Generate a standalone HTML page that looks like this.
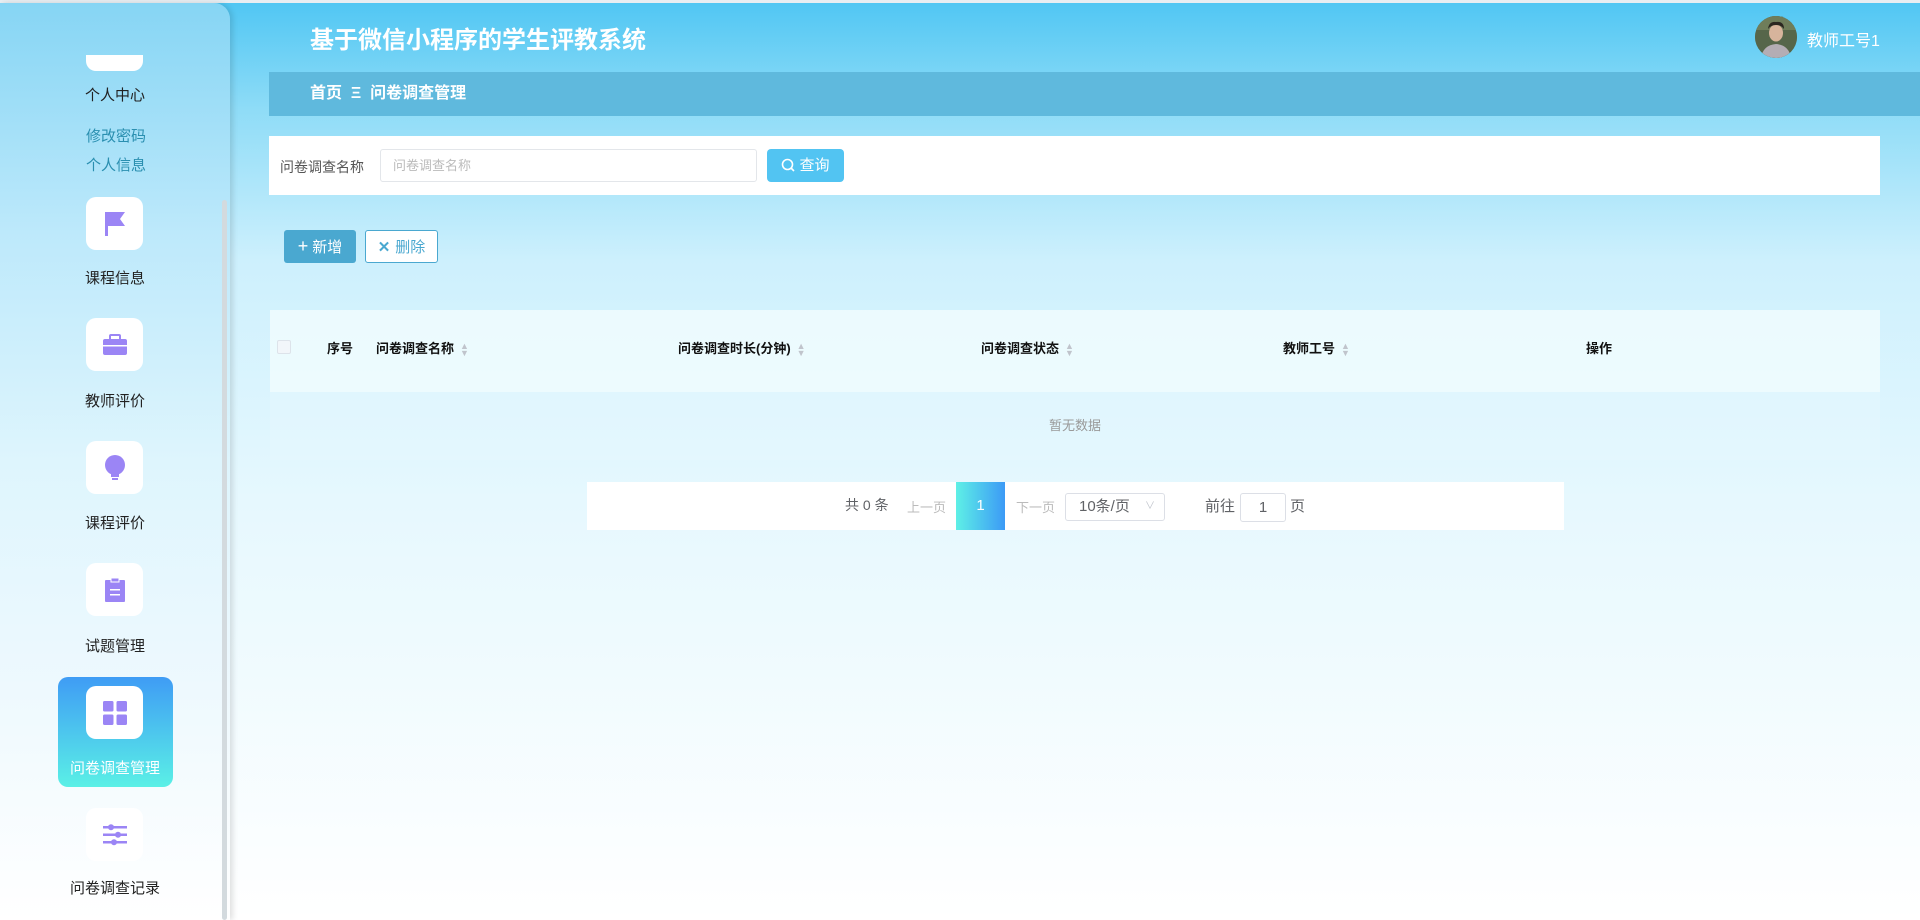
<!DOCTYPE html>
<html><head><meta charset="utf-8"><style>
*{box-sizing:border-box;margin:0;padding:0}
body{width:1920px;height:920px;overflow:hidden;font-family:"Liberation Sans","Noto Sans CJK SC",sans-serif;background:linear-gradient(180deg,#4fc6f3 0px,#8fdcf7 110px,#cdf0fd 260px,#e6f8fe 500px,#ffffff 920px);position:relative}
.top{position:absolute;left:0;top:0;width:1920px;height:3px;background:#e8eef2}
.side{position:absolute;left:0;top:3px;width:230px;height:917px;border-radius:0 16px 0 0;background:linear-gradient(180deg,#86d5f4 0%,#bde9fb 25%,#def5fd 50%,#eef9fe 75%,#fff 100%);box-shadow:3px 0 6px rgba(0,0,0,.12);overflow:hidden}
.scroll{position:absolute;left:222px;top:200px;width:5px;height:720px;background:#d3dade;border-radius:3px}
.ib{position:absolute;left:86px;width:57px;height:53px;background:#fff;border-radius:10px;display:flex;align-items:center;justify-content:center}
.lb{position:absolute;left:0;width:230px;text-align:center;font-size:15px;color:#222}
.sub{position:absolute;left:86px;font-size:15px;color:#2a8fb0}
.active{position:absolute;left:58px;top:674px;width:115px;height:110px;border-radius:10px;background:linear-gradient(180deg,#3f9cf5,#5af0e6)}
.title{position:absolute;left:310px;top:20px;font-size:24px;font-weight:bold;color:#fff}
.user{position:absolute;left:1807px;top:27px;font-size:16px;color:#fff}
.av{position:absolute;left:1755px;top:16px;width:42px;height:42px;border-radius:50%;overflow:hidden;background:#5b6a4e}
.bc{position:absolute;left:269px;top:72px;width:1651px;height:44px;background:#5fb9dd;color:#fff;font-weight:bold;font-size:16px;line-height:44px;padding-left:41px}
.search{position:absolute;left:269px;top:136px;width:1611px;height:59px;background:#fff}
.search .l{position:absolute;left:11px;top:21px;font-size:14px;color:#555}
.search .in{position:absolute;left:111px;top:13px;width:377px;height:33px;border:1px solid #e3e6ea;border-radius:3px;font-size:13px;color:#bbb;line-height:31px;padding-left:12px}
.btn{position:absolute;top:230px;height:33px;border-radius:3px;font-size:15px;line-height:33px;text-align:center}
.th{position:absolute;left:270px;top:310px;width:1610px;height:82px;background:rgba(240,251,254,.85)}
.th span{position:absolute;top:28px;font-size:13px;font-weight:bold;color:#111}
.sort{display:inline-block;width:9px;margin-left:6px;vertical-align:middle;color:#c0c4cc;font-size:9px;line-height:7px;font-style:normal}
.empty{position:absolute;left:270px;top:392px;width:1610px;height:68px;background:rgba(230,247,253,.5);text-align:center;line-height:68px;font-size:13px;color:#999}
.pg{position:absolute;left:587px;top:482px;width:977px;height:48px;background:#fff;font-size:15px;color:#606266}
.pg>*{position:absolute}
</style></head><body>
<div class="top"></div>
<div class="title">基于微信小程序的学生评教系统</div>
<div class="av"><svg width="42" height="42" viewBox="0 0 42 42"><rect width="42" height="42" fill="#56664a"/><rect y="0" width="42" height="14" fill="#6f7d5a"/><ellipse cx="21" cy="17" rx="7" ry="8.5" fill="#d7b49c"/><path d="M13 13Q14 5 21 6Q29 5 29 13Q26 9 21 9Q16 9 13 13Z" fill="#2b2620"/><path d="M6 42Q8 29 21 28Q34 29 36 42Z" fill="#b4adb4"/></svg></div>
<div class="user">教师工号1</div>
<div class="bc">首页 &nbsp;Ξ&nbsp; 问卷调查管理</div>

<div class="side">
 <div class="ib" style="top:52px;height:16px;border-radius:0 0 10px 10px"></div>
 <div class="lb" style="top:81px">个人中心</div>
 <div class="sub" style="top:122px">修改密码</div>
 <div class="sub" style="top:151px">个人信息</div>
 <div class="ib" style="top:194px"><svg width="24" height="28" viewBox="0 0 24 28"><rect x="2" y="2" width="3" height="24" fill="#9b85f5"/><path d="M5 2H22L17 9L22 16H5Z" fill="#9b85f5"/></svg></div>
 <div class="lb" style="top:264px">课程信息</div>
 <div class="ib" style="top:315px"><svg width="26" height="22" viewBox="0 0 26 22"><rect x="8" y="1" width="10" height="5" rx="1" fill="none" stroke="#9b85f5" stroke-width="2"/><rect x="1" y="5" width="24" height="16" rx="2" fill="#9b85f5"/><rect x="1" y="11" width="24" height="1.5" fill="#fff"/></svg></div>
 <div class="lb" style="top:387px">教师评价</div>
 <div class="ib" style="top:438px"><svg width="24" height="28" viewBox="0 0 24 28"><circle cx="12" cy="11" r="10" fill="#9b85f5"/><rect x="8" y="19" width="8" height="4" fill="#9b85f5"/><rect x="9" y="24" width="6" height="2" fill="#9b85f5"/></svg></div>
 <div class="lb" style="top:509px">课程评价</div>
 <div class="ib" style="top:560px"><svg width="22" height="26" viewBox="0 0 22 26"><rect x="1" y="3" width="20" height="22" rx="1" fill="#9b85f5"/><rect x="7" y="1" width="8" height="4" fill="#9b85f5" stroke="#fff" stroke-width="1"/><rect x="6" y="12" width="10" height="1.5" fill="#fff"/><rect x="6" y="17" width="10" height="1.5" fill="#fff"/></svg></div>
 <div class="lb" style="top:632px">试题管理</div>
 <div class="active"></div>
 <div class="ib" style="top:683px"><svg width="24" height="24" viewBox="0 0 24 24"><rect x="0" y="0" width="10.5" height="10.5" rx="1.5" fill="#9b85f5"/><rect x="13.5" y="0" width="10.5" height="10.5" rx="1.5" fill="#9b85f5"/><rect x="0" y="13.5" width="10.5" height="10.5" rx="1.5" fill="#9b85f5"/><rect x="13.5" y="13.5" width="10.5" height="10.5" rx="1.5" fill="#9b85f5"/></svg></div>
 <div class="lb" style="top:754px;color:#fff">问卷调查管理</div>
 <div class="ib" style="top:805px"><svg width="24" height="22" viewBox="0 0 24 22"><rect x="0" y="2" width="24" height="2.5" fill="#9b85f5"/><rect x="0" y="9.5" width="24" height="2.5" fill="#9b85f5"/><rect x="0" y="17" width="24" height="2.5" fill="#9b85f5"/><circle cx="8" cy="3.2" r="3" fill="#9b85f5"/><circle cx="15" cy="10.7" r="3" fill="#9b85f5"/><circle cx="11" cy="18.2" r="3" fill="#9b85f5"/></svg></div>
 <div class="lb" style="top:874px">问卷调查记录</div>
 <div class="scroll" style="top:197px"></div>
</div>

<div class="search"><div class="l">问卷调查名称</div><div class="in">问卷调查名称</div></div>
<div style="position:absolute;left:767px;top:149px;width:77px;height:33px;border-radius:4px;background:#52c4f2;color:#fff;font-size:15px;line-height:33px;text-align:center"><svg width="14" height="14" viewBox="0 0 14 14" style="vertical-align:-2px;margin-right:4px"><circle cx="6.5" cy="6.5" r="5" fill="none" stroke="#fff" stroke-width="1.6"/><path d="M10 10L13 13" stroke="#fff" stroke-width="1.6"/></svg>查询</div>

<div class="btn" style="left:284px;width:72px;background:#4aa8d0;color:#fff"><span style="font-size:18px;margin-right:4px">+</span>新增</div>
<div class="btn" style="left:365px;width:73px;background:#fff;border:1px solid #4aa8d0;color:#4aa8d0"><b style="margin-right:5px">✕</b>删除</div>

<div class="th">
 <div style="position:absolute;left:7px;top:30px;width:14px;height:14px;border:1px solid #dde3ea;background:#f2f6fa;border-radius:2px"></div>
 <span style="left:57px">序号</span>
 <span style="left:106px">问卷调查名称<i class="sort">▲<br>▼</i></span>
 <span style="left:408px">问卷调查时长(分钟)<i class="sort">▲<br>▼</i></span>
 <span style="left:711px">问卷调查状态<i class="sort">▲<br>▼</i></span>
 <span style="left:1013px">教师工号<i class="sort">▲<br>▼</i></span>
 <span style="left:1316px">操作</span>
</div>
<div class="empty">暂无数据</div>

<div class="pg">
 <div style="left:258px;top:13px;font-size:14px">共 0 条</div>
 <div style="left:320px;top:15px;font-size:13px;color:#bbb">上一页</div>
 <div style="left:369px;top:0;width:49px;height:48px;background:linear-gradient(90deg,#5ef0e6,#3c9af6);color:#fff;text-align:center;line-height:48px;font-size:15px">1</div>
 <div style="left:429px;top:15px;font-size:13px;color:#bbb">下一页</div>
 <div style="left:478px;top:11px;width:100px;height:28px;border:1px solid #dcdfe6;border-radius:3px;line-height:26px;padding-left:13px;font-size:15px">10条/页<span style="position:absolute;right:9px;color:#c0c4cc;font-size:10px">∨</span></div>
 <div style="left:618px;top:13px">前往</div>
 <div style="left:653px;top:11px;width:46px;height:29px;border:1px solid #dcdfe6;border-radius:3px;text-align:center;line-height:27px">1</div>
 <div style="left:703px;top:13px">页</div>
</div>
</body></html>
